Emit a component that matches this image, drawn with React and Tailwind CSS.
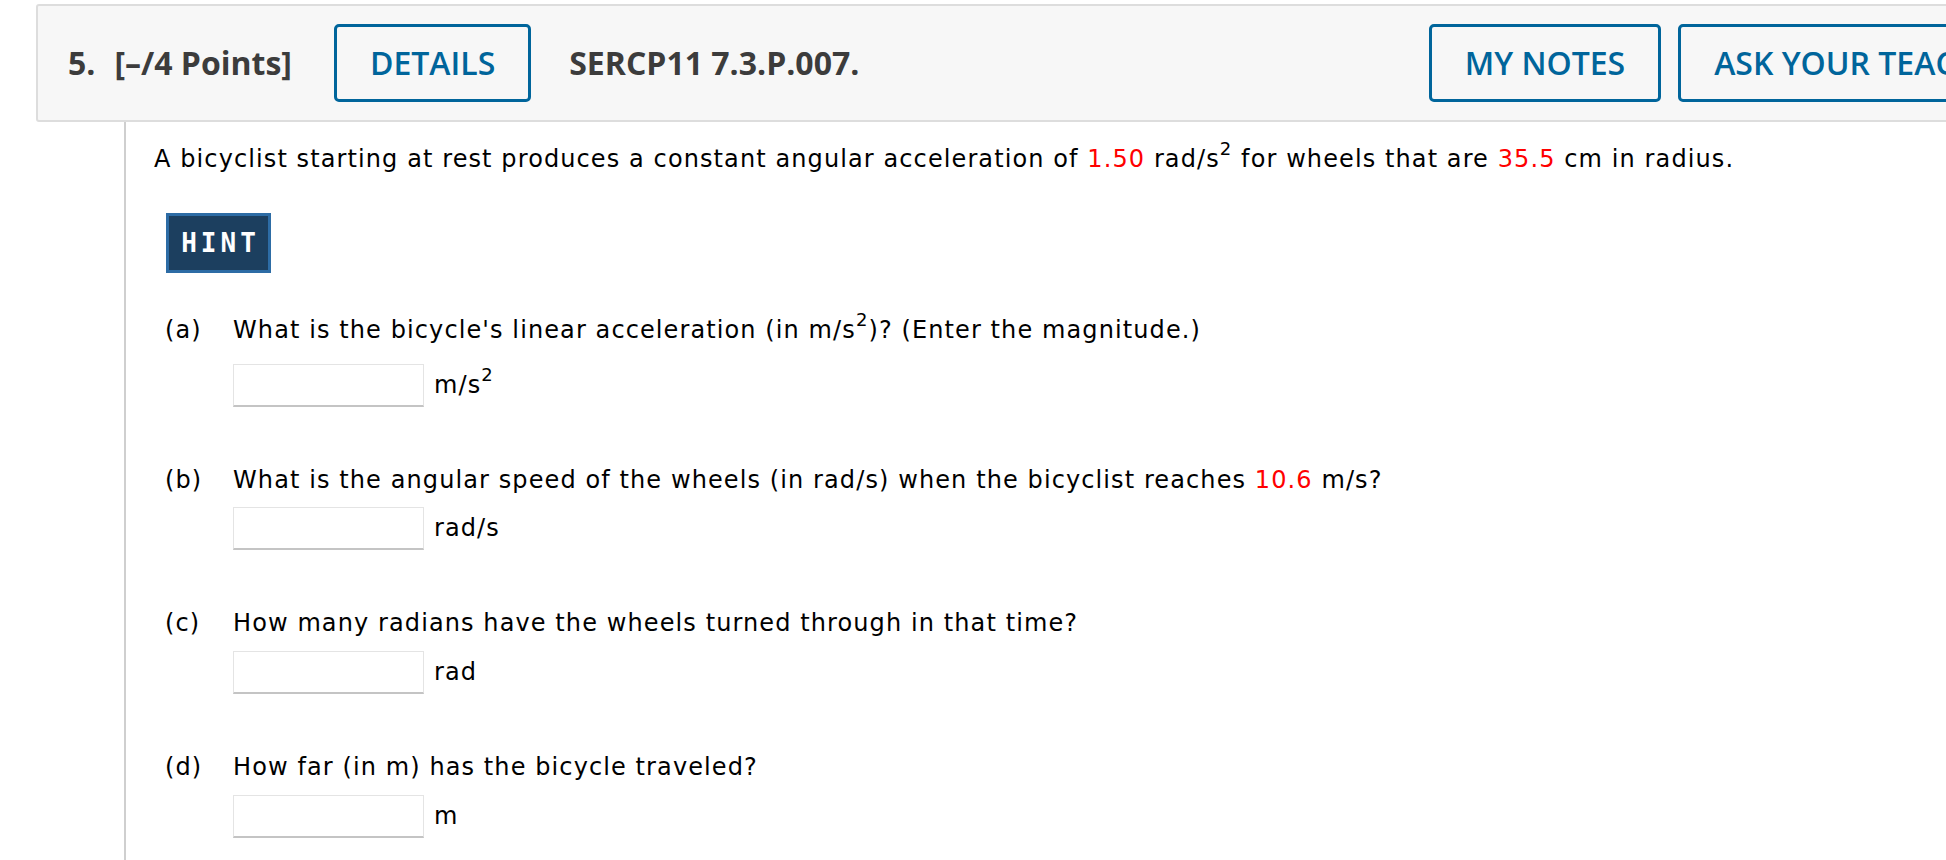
const Sup = () => <sup className="text-[18px] top-[-0.65em]">2</sup>;

const questions = [
  {
    label: "(a)",
    text: (
      <>
        What is the bicycle's linear acceleration (in m/s<Sup />)? (Enter the magnitude.)
      </>
    ),
    unit: (
      <>
        m/s<Sup />
      </>
    ),
    gap: "mt-[17px]",
  },
  {
    label: "(b)",
    text: (
      <>
        What is the angular speed of the wheels (in rad/s) when the bicyclist reaches{" "}
        <span className="text-[#ff0000]">10.6</span> m/s?
      </>
    ),
    unit: "rad/s",
    gap: "mt-[10px]",
  },
  {
    label: "(c)",
    text: "How many radians have the wheels turned through in that time?",
    unit: "rad",
    gap: "mt-[11px]",
  },
  {
    label: "(d)",
    text: "How far (in m) has the bicycle traveled?",
    unit: "m",
    gap: "mt-[11px]",
  },
];

const HeaderButton = ({ children }) => (
  <button className="h-[78px] px-[33px] border-[3px] border-[#00659b] rounded-[5px] text-[32px] font-semibold text-[#00659b] whitespace-nowrap bg-transparent">
    {children}
  </button>
);

export default function App() {
  return (
    <div className="w-full h-[860px] overflow-hidden bg-white font-['Open_Sans',sans-serif]">
      <div className="w-[2120px]">
        {/* Question header */}
        <div className="ml-[36px] mt-[4px] w-[2040px] h-[118px] flex items-center pl-[30px] pr-[20px] bg-[#f7f7f7] border-2 border-[#dddddd] rounded-[3px] text-[#3c3c3c]">
          <span className="text-[32px] font-bold">5.</span>
          <span className="ml-[19px] text-[32px] font-bold">[–/4 Points]</span>
          <div className="ml-[42px]">
            <HeaderButton>DETAILS</HeaderButton>
          </div>
          <span className="ml-[38px] text-[32px] font-bold">SERCP11 7.3.P.007.</span>
          <div className="ml-auto flex gap-[17px]">
            <HeaderButton>MY NOTES</HeaderButton>
            <HeaderButton>ASK YOUR TEACHER</HeaderButton>
          </div>
        </div>

        {/* Question body */}
        <div className="ml-[124px] border-l-2 border-[#cfcfcf] h-[740px] pl-[28px] pt-[20px] font-['DejaVu_Sans',Verdana,sans-serif] text-[24px] tracking-[1.1px] text-black">
          <p className="leading-[34px]">
            A bicyclist starting at rest produces a constant angular acceleration of{" "}
            <span className="text-[#ff0000]">1.50</span> rad/s<Sup /> for wheels that are{" "}
            <span className="text-[#ff0000]">35.5</span> cm in radius.
          </p>

          <button className="mt-[37px] ml-[12px] w-[105px] h-[60px] flex items-center justify-center bg-[#1c3f5f] border-[3px] border-[#2d6ca5] text-white font-['DejaVu_Sans_Mono',monospace] font-bold text-[26px] tracking-[4px] pl-[4px]">
            HINT
          </button>

          <div className="ml-[11px]">
            {questions.map((q, i) => (
              <div key={q.label} className={i === 0 ? "mt-[40px]" : "mt-[56px]"}>
                <div className="flex leading-[34px]">
                  <span className="w-[68px] shrink-0">{q.label}</span>
                  <span>{q.text}</span>
                </div>
                <div className={`${q.gap} ml-[68px] flex items-center`}>
                  <input
                    type="text"
                    className="w-[191px] h-[43px] bg-white border border-[#e4e4e4] border-b-2 border-b-[#c4c4c4] outline-none"
                  />
                  <span className="ml-[10px] -mt-[2px]">{q.unit}</span>
                </div>
              </div>
            ))}
          </div>
        </div>
      </div>
    </div>
  );
}
